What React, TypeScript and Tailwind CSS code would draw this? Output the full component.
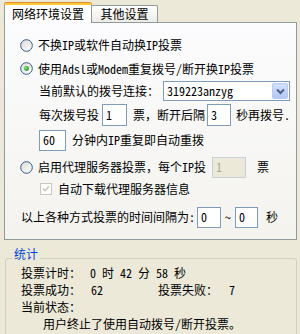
import React from "react";

function Radio({ checked }: { checked?: boolean }) {
  return (
    <svg width="13" height="13" viewBox="0 0 13 13" className="shrink-0">
      <defs>
        <linearGradient id={checked ? "rgc" : "rgu"} x1="0" y1="0" x2="1" y2="1">
          <stop offset="0" stopColor="#DCDBD4" />
          <stop offset="1" stopColor="#FFFFFF" />
        </linearGradient>
        <radialGradient id="dot" cx="0.4" cy="0.4" r="0.6">
          <stop offset="0" stopColor="#A8F0A0" />
          <stop offset="0.6" stopColor="#3DB33A" />
          <stop offset="1" stopColor="#1E8E1E" />
        </radialGradient>
      </defs>
      <circle cx="6.5" cy="6.5" r="5.8" fill={`url(#${checked ? "rgc" : "rgu"})`} stroke="#2F5A8A" strokeWidth="1" />
      {checked && <circle cx="6.5" cy="6.5" r="2.4" fill="url(#dot)" />}
    </svg>
  );
}

function CheckDisabled() {
  return (
    <svg width="12" height="12" viewBox="0 0 12 12" className="shrink-0">
      <rect x="0.5" y="0.5" width="11" height="11" fill="#FFFFFF" stroke="#CAC8BB" />
      <path d="M3 5.5 L5 7.5 L9 3.5" fill="none" stroke="#CAC8BB" strokeWidth="1.6" />
    </svg>
  );
}

function Box({ value, w, h, disabled }: { value: string; w: string; h: string; disabled?: boolean }) {
  return (
    <div
      className={`${w} ${h} shrink-0 border flex items-center pl-[3px] ${
        disabled ? "bg-[#ECE9D8] border-[#C9D0D8] text-[#ACA899]" : "bg-white border-[#7F9DB9] text-black"
      }`}
    >
      {value}
    </div>
  );
}

export default function App() {
  return (
    <div className="w-[300px] h-[334px] overflow-hidden bg-[#ECE9D8] text-black text-[12px] leading-[14px] font-['Noto_Sans_Mono_CJK_SC','Noto_Sans_CJK_SC',sans-serif]">
      {/* tabs */}
      <div className="h-[22px] flex items-end pl-[4px]">
        <div className="relative z-10 -mb-px w-[88px] h-[21px] bg-white border-l border-r border-[#919B9C] rounded-t-[3px] flex flex-col">
          <div className="h-[3px] -mx-px rounded-t-[3px] bg-[#FFC83C] border-t border-[#E68B2C]" />
          <div className="flex-1 flex items-center justify-center pb-[1px]">网络环境设置</div>
        </div>
        <div className="w-[67px] h-[17px] -ml-px border-t border-l border-r border-[#919B9C] rounded-t-[2px] bg-gradient-to-b from-white to-[#ECEBE6] flex items-center justify-center">
          其他设置
        </div>
      </div>

      {/* panel */}
      <div className="ml-[4px] w-[293px] h-[218px] border border-[#919B9C] bg-gradient-to-b from-[#FCFCFE] to-[#F4F3EE] pt-[10px] flex flex-col">
        <div className="h-[24px] flex items-center pl-[15px] gap-[5px]">
          <Radio />
          <span>不换IP或软件自动换IP投票</span>
        </div>
        <div className="h-[23px] flex items-center pl-[15px] gap-[5px]">
          <Radio checked />
          <span>使用Adsl或Modem重复拨号/断开换IP投票</span>
        </div>
        <div className="h-[22px] flex items-center pl-[34px]">
          <span>当前默认的拨号连接：</span>
          <div className="ml-[4px] w-[127px] h-[20px] bg-white border border-[#7F9DB9] flex items-center">
            <span className="flex-1 pl-[3px]">319223anzyg</span>
            <div className="w-[16px] h-[16px] mr-px rounded-[2px] border border-[#B7CBF3] bg-gradient-to-b from-[#D4E1FC] to-[#B2C7F5] flex items-center justify-center">
              <svg width="9" height="7" viewBox="0 0 9 7">
                <path d="M1 1.5 L4.5 5 L8 1.5" fill="none" stroke="#4D6185" strokeWidth="2" />
              </svg>
            </div>
          </div>
        </div>
        <div className="h-[26px] flex items-center pl-[34px]">
          <span>每次拨号投</span>
          <div className="ml-[3px]">
            <Box value="1" w="w-[25px]" h="h-[22px]" />
          </div>
          <span className="ml-[6px]">票，断开后隔</span>
          <div className="ml-[2px]">
            <Box value="3" w="w-[24px]" h="h-[22px]" />
          </div>
          <span className="ml-[5px]">秒再拨号.</span>
        </div>
        <div className="h-[24px] flex items-center pl-[34px]">
          <Box value="60" w="w-[27px]" h="h-[21px]" />
          <span className="ml-[6px]">分钟内IP重复即自动重拨</span>
        </div>
        <div className="h-[30px] flex items-center pl-[15px]">
          <Radio />
          <span className="ml-[5px]">启用代理服务器投票，每个IP投</span>
          <div className="ml-[6px]">
            <Box value="1" w="w-[34px]" h="h-[21px]" disabled />
          </div>
          <span className="ml-[11px]">票</span>
        </div>
        <div className="h-[14px] flex items-center pl-[35px]">
          <CheckDisabled />
          <span className="ml-[6px]">自动下载代理服务器信息</span>
        </div>
        <div className="h-[42px] flex items-center pl-[16px]">
          <span>以上各种方式投票的时间间隔为:</span>
          <div className="ml-[2px]">
            <Box value="0" w="w-[24px]" h="h-[21px]" />
          </div>
          <span className="mx-[4px]">~</span>
          <Box value="0" w="w-[23px]" h="h-[21px]" />
          <span className="ml-[8px]">秒</span>
        </div>
      </div>

      {/* stats group */}
      <div className="relative mt-[18px] ml-[5px] mr-[3px] h-[100px] border border-[#D0D0BF] rounded-[3px] pt-[5px] pl-[15px]">
        <span className="absolute left-[6px] -top-[12px] px-[2px] bg-[#ECE9D8] text-[#0046D5]">统计</span>
        <div className="h-[17px] flex items-center">
          <span className="w-[69px]">投票计时：</span>
          <span className="whitespace-pre">0 时 42 分 58 秒</span>
        </div>
        <div className="h-[17px] flex items-center">
          <span className="w-[70px]">投票成功：</span>
          <span className="w-[67px]">62</span>
          <span className="w-[71px]">投票失败：</span>
          <span>7</span>
        </div>
        <div className="h-[17px] flex items-center">当前状态：</div>
        <div className="h-[17px] flex items-center pl-[22px]">用户终止了使用自动拨号/断开投票。</div>
      </div>
    </div>
  );
}
